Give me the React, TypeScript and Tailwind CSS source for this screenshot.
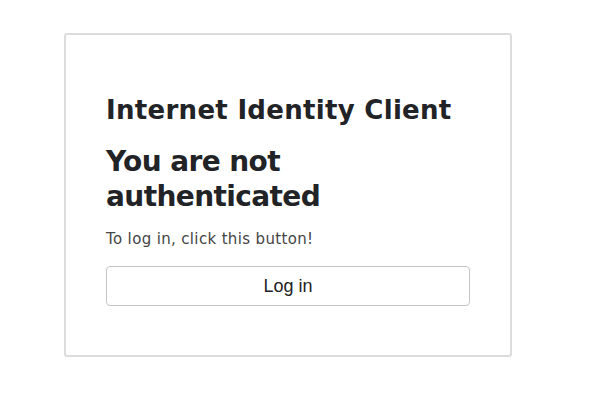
import React from 'react';

export default function App() {
  return (
    <div className="min-h-[403px] w-[590px] bg-white pt-[33px]">
      <div className="ml-[64px] w-[448px] rounded-[3px] border-2 border-[#dcdcdc] px-[40px] pb-[49px] pt-[59px] font-['DejaVu_Sans',sans-serif] text-[#222326]">
        <h1 className="text-[26px] font-bold leading-[32px] tracking-[0.3px]">Internet Identity Client</h1>
        <h2 className="mt-[18px] text-[28px] font-bold leading-[35px] tracking-[-0.6px]">
          You are not authenticated
        </h2>
        <p className="mt-[14px] text-[15px] leading-[22px] tracking-[0.35px] text-[#444]">To log in, click this button!</p>
        <button className="mt-[16px] h-[40px] w-full rounded-[4px] border border-[#c4c4c4] bg-white font-['Liberation_Sans',sans-serif] text-[18px] text-[#222]">
          Log in
        </button>
      </div>
    </div>
  );
}
